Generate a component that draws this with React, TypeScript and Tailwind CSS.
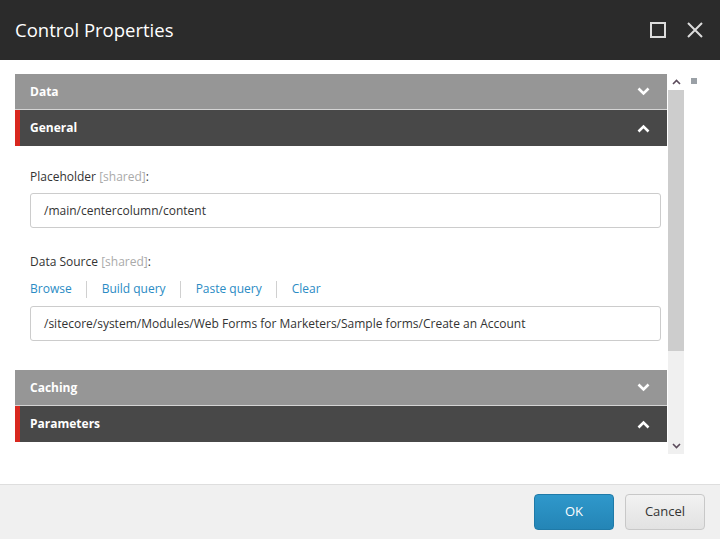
import React from 'react';

const font = { fontFamily: '"Open Sans", "Noto Sans", sans-serif' };

const Chevron = ({ up }: { up?: boolean }) => (
  <svg width="13" height="9" viewBox="0 0 13 9" className="block">
    <path
      d={up ? 'M1.5 7.5 L6.5 2.5 L11.5 7.5' : 'M1.5 1.5 L6.5 6.5 L11.5 1.5'}
      fill="none"
      stroke="#fff"
      strokeWidth="2.6"
    />
  </svg>
);

const SectionHeader = ({ title, open }: { title: string; open?: boolean }) => (
  <div
    className={
      open
        ? 'flex h-[36px] items-center justify-between border-l-[5px] border-[#d8281f] bg-[#484848] pl-[10px] pr-[17px]'
        : 'flex h-[36px] items-center justify-between border-b border-[#d4d4d4] bg-[#969696] pl-[15px] pr-[17px]'
    }
  >
    <span className="text-[12px] font-bold text-white">{title}</span>
    <Chevron up={open} />
  </div>
);

const Label = ({ text }: { text: string }) => (
  <div className="text-[12px] text-[#333]">
    {text} <span className="text-[#aaa]">[shared]</span>:
  </div>
);

const links = ['Browse', 'Build query', 'Paste query', 'Clear'];

export default function App() {
  return (
    <div className="flex h-[539px] w-[720px] flex-col bg-white" style={font}>
      {/* title bar */}
      <div className="flex h-[60px] shrink-0 items-center justify-between bg-[#2b2b2b] pl-[15px] pr-[17px]">
        <span className="text-[18.5px] text-white">Control Properties</span>
        <div className="flex items-center gap-[21px]">
          <svg width="16" height="16" viewBox="0 0 16 16">
            <rect x="1" y="1" width="14" height="14" fill="none" stroke="#dcdcdc" strokeWidth="2" />
          </svg>
          <svg width="16" height="16" viewBox="0 0 16 16">
            <path d="M1 1 L15 15 M15 1 L1 15" stroke="#dcdcdc" strokeWidth="2" />
          </svg>
        </div>
      </div>

      {/* body */}
      <div className="flex flex-1 pl-[15px] pt-[14px]">
        <div className="flex h-[380px] w-[652px] flex-col">
          <SectionHeader title="Data" />
          <SectionHeader title="General" open />
          <div className="pb-[29px] pl-[15px] pr-[6px] pt-[22px]">
            <Label text="Placeholder" />
            <div className="mt-[7px] flex h-[35px] items-center rounded-[3px] border border-[#cccccc] px-[13px] text-[12px] text-[#333]">
              /main/centercolumn/content
            </div>
            <div className="mt-[25px]">
              <Label text="Data Source" />
            </div>
            <div className="mt-[9px] flex items-center text-[12px] text-[#2a8bc4]">
              {links.map((l, i) => (
                <React.Fragment key={l}>
                  {i > 0 && <span className="mx-[14.5px] h-[17px] w-px bg-[#d0d0d0]" />}
                  <span>{l}</span>
                </React.Fragment>
              ))}
            </div>
            <div className="mt-[8px] flex h-[35px] items-center rounded-[3px] border border-[#cccccc] px-[13px] text-[12px] text-[#333]">
              /sitecore/system/Modules/Web Forms for Marketers/Sample forms/Create an Account
            </div>
          </div>
          <SectionHeader title="Caching" />
          <SectionHeader title="Parameters" open />
        </div>

        {/* scrollbar */}
        <div className="ml-px flex h-[380px] w-[16px] flex-col bg-[#f0f0f0]">
          <div className="flex h-[16px] items-center justify-center bg-white">
            <svg width="9" height="6" viewBox="0 0 9 6">
              <path d="M1 5 L4.5 1.5 L8 5" fill="none" stroke="#5b4b5b" strokeWidth="1.6" />
            </svg>
          </div>
          <div className="h-[261px] bg-[#cdcdcd]" />
          <div className="flex-1" />
          <div className="flex h-[16px] items-center justify-center">
            <svg width="9" height="6" viewBox="0 0 9 6">
              <path d="M1 1 L4.5 4.5 L8 1" fill="none" stroke="#5b4b5b" strokeWidth="1.6" />
            </svg>
          </div>
        </div>
        <div className="ml-[7px] mt-[4px] h-[6px] w-[6px] bg-[#9aa0a6]" />
      </div>

      {/* footer */}
      <div className="flex h-[55px] shrink-0 items-center justify-end gap-[11px] border-t border-[#dedede] bg-[#f0f0f0] pr-[15px]">
        <button className="h-[36px] w-[80px] rounded-[4px] border border-[#1f7aa8] bg-gradient-to-b from-[#2f98cb] to-[#2485b6] text-[13px] text-white">
          OK
        </button>
        <button className="h-[36px] w-[80px] rounded-[4px] border border-[#c8c8c8] bg-gradient-to-b from-[#f2f2f2] to-[#e2e2e2] text-[13px] text-[#333]">
          Cancel
        </button>
      </div>
    </div>
  );
}
